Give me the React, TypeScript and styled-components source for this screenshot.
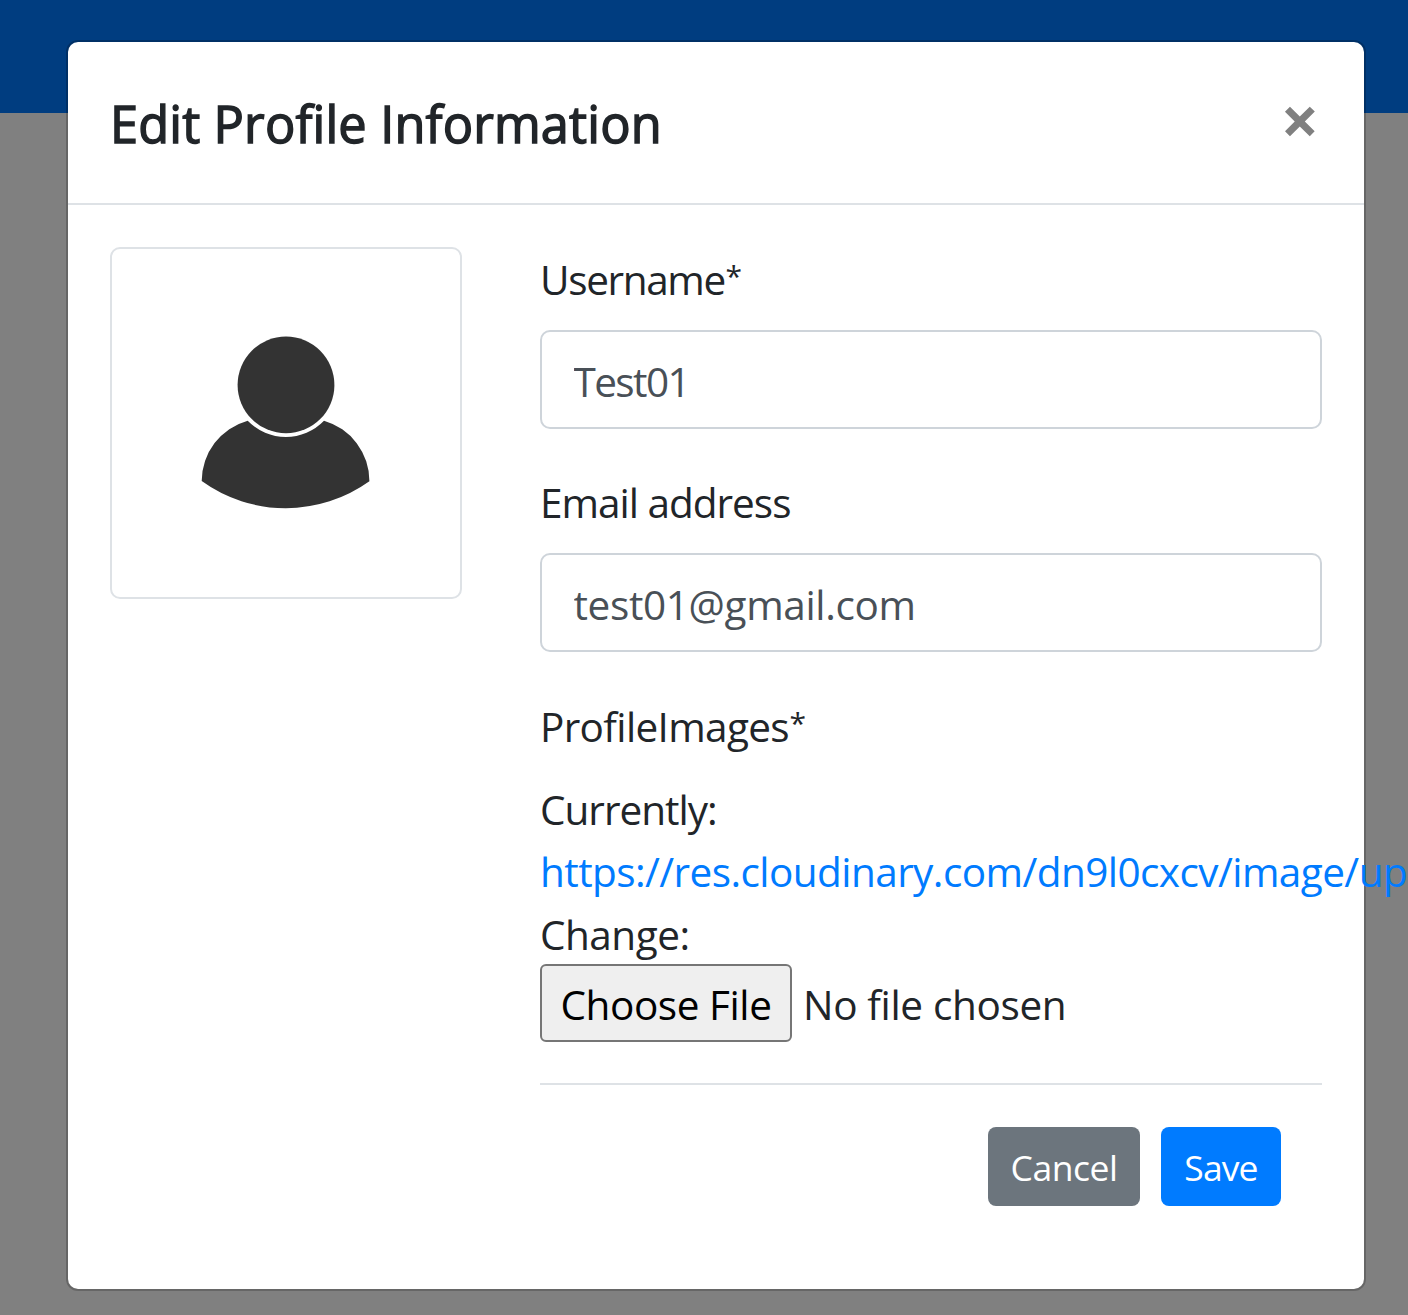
import React from "react";
import styled, { createGlobalStyle } from "styled-components";

const GlobalStyle = createGlobalStyle`
  *, *::before, *::after { box-sizing: border-box; }
  body {
    margin: 0;
    overflow: hidden;
    background: #808080;
    color: #212529;
    font-family: "Open Sans", "Noto Sans", sans-serif;
    font-size: 40.5px;
    line-height: 62.5px;
  }
`;

const Page = styled.div`
  position: relative;
  height: 1315px;
  overflow: hidden;
`;

const Navbar = styled.nav`
  height: 113px;
  background: #003d80;
`;

const Overlay = styled.div`
  position: absolute;
  inset: 0;
  padding: 40px 42px 0 66px;
`;

const Dialog = styled.section`
  height: 1251px;
  border: 2px solid rgba(0, 0, 0, 0.2);
  border-radius: 12px;
  background: #fff;
  background-clip: padding-box;
`;

const Header = styled.header`
  display: flex;
  justify-content: space-between;
  align-items: flex-start;
  height: 163px;
  padding: 42px;
  border-bottom: 2px solid #dee2e6;
`;

const Title = styled.h5`
  margin: 0;
  padding-top: 1px;
  font-size: 50.5px;
  font-weight: 400;
  line-height: 78px;
  letter-spacing: 0.15px;
  -webkit-text-stroke: 1.4px currentColor;
`;

const CloseButton = styled.button`
  width: 44px;
  margin: 0;
  padding: 0;
  border: 0;
  background: none;
  color: #808080;
  font: 700 67px/71px "Open Sans", sans-serif;
`;

const Body = styled.div`
  display: grid;
  grid-template-columns: 352px 1fr;
  column-gap: 78px;
  align-items: start;
  padding: 42px;
`;

const Thumbnail = styled.div`
  height: 352px;
  border: 2px solid #dee2e6;
  border-radius: 10px;
  svg { display: block; }
`;

const Form = styled.form`
  min-width: 0;
`;

const Field = styled.div`
  display: flex;
  flex-direction: column;
  height: 182px;
  margin-bottom: 41px;
`;

const Label = styled.label<{ $track?: number; $drop?: number }>`
  display: block;
  height: 83px;
  padding-top: ${({ $drop = 2 }) => $drop}px;
  white-space: nowrap;
  letter-spacing: ${({ $track = 0 }) => $track}px;
`;

const Required = styled.span`
  margin-left: 0.5px;
  font-size: 30px;
  line-height: 0;
  vertical-align: 8px;
`;

const TextInput = styled.input<{ $track?: number }>`
  width: 100%;
  height: 99px;
  padding: 3px 31.5px 0;
  border: 2px solid #ced4da;
  border-radius: 10px;
  outline: 0;
  background: #fff;
  color: #495057;
  font: inherit;
  letter-spacing: ${({ $track = 0 }) => $track}px;
`;

const CurrentImage = styled.div`
  padding-top: 2.5px;
`;

const Line = styled.div<{ $track?: number }>`
  height: 62.5px;
  white-space: nowrap;
  letter-spacing: ${({ $track = 0 }) => $track}px;
`;

const ImageLink = styled.a`
  color: #007bff;
  text-decoration: none;
`;

const FilePicker = styled.div`
  display: flex;
  align-items: center;
  gap: 11px;
  height: 78px;
  margin-top: -2px;
  letter-spacing: -0.35px;
`;

const ChooseButton = styled.button`
  width: 252px;
  height: 78px;
  padding: 5px 0 0;
  border: 2px solid #767676;
  border-radius: 6px;
  background: #efefef;
  color: #000;
  font: inherit;
  letter-spacing: -0.44px;
`;

const FileName = styled.span`
  padding-top: 5px;
`;

const Footer = styled.footer`
  display: flex;
  justify-content: flex-end;
  gap: 21px;
  margin-top: 41px;
  padding: 42px 41px 0 0;
  border-top: 2px solid #dee2e6;
`;

const Action = styled.button<{ $primary?: boolean }>`
  width: ${({ $primary }) => ($primary ? 120 : 152)}px;
  height: 79px;
  padding: 2px 0 0;
  border: 0;
  border-radius: 8px;
  background: ${({ $primary }) => ($primary ? "#007bff" : "#6c757d")};
  color: #fff;
  font: inherit;
  font-size: 35.5px;
  letter-spacing: ${({ $primary }) => ($primary ? -0.9 : -0.5)}px;
`;

const Avatar = () => (
  <svg width="348" height="348" viewBox="112 249 348 348" fill="#333">
    <circle cx="286" cy="384.9" r="48.4" />
    <path d="M201.7 481A62.8 62.8 0 0 1 247.7 420.7A53 53 0 0 0 324 420.7A62.8 62.8 0 0 1 369.4 481.3A143.5 143.5 0 0 1 201.7 481Z" />
  </svg>
);

export default function App() {
  return (
    <Page>
      <GlobalStyle />
      <Navbar />
      <Overlay>
        <Dialog>
          <Header>
            <Title>Edit Profile Information</Title>
            <CloseButton type="button" aria-label="Close">×</CloseButton>
          </Header>
          <Body>
            <Thumbnail>
              <Avatar />
            </Thumbnail>
            <Form>
              <Field>
                <Label $track={-1.35}>
                  Username<Required>*</Required>
                </Label>
                <TextInput $track={-1.6} defaultValue="Test01" />
              </Field>
              <Field>
                <Label $track={-1}>Email address</Label>
                <TextInput $track={-0.36} defaultValue="test01@gmail.com" />
              </Field>
              <Label $track={-0.65} $drop={3}>
                ProfileImages<Required>*</Required>
              </Label>
              <CurrentImage>
                <Line $track={-1}>Currently:</Line>
                <Line $track={-0.57}>
                  <ImageLink href="#">https://res.cloudinary.com/dn9l0cxcv/image/up</ImageLink>
                </Line>
                <Line $track={-0.5}>Change:</Line>
              </CurrentImage>
              <FilePicker>
                <ChooseButton type="button">Choose File</ChooseButton>
                <FileName>No file chosen</FileName>
              </FilePicker>
              <Footer>
                <Action type="button">Cancel</Action>
                <Action type="button" $primary>Save</Action>
              </Footer>
            </Form>
          </Body>
        </Dialog>
      </Overlay>
    </Page>
  );
}
